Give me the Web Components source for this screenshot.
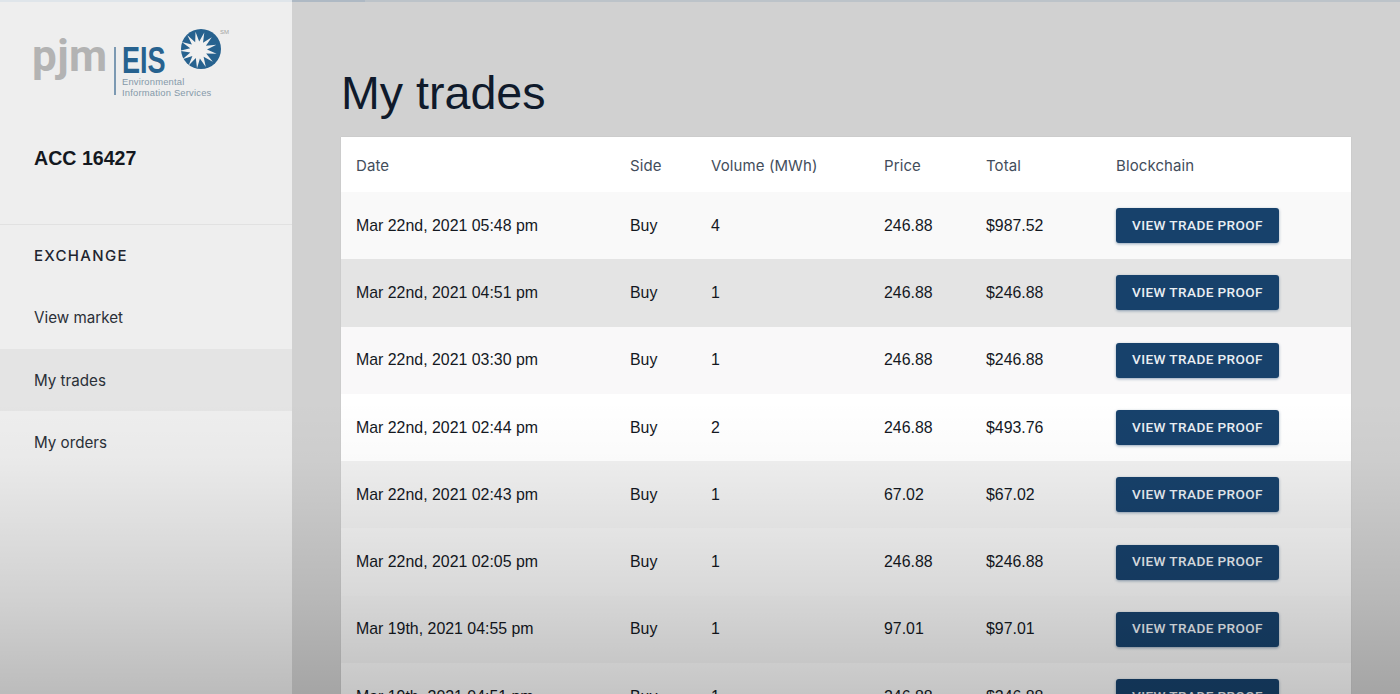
<!DOCTYPE html>
<html>
<head>
<meta charset="utf-8">
<title>My trades</title>
<style>
  html, body { margin: 0; height: 694px; overflow: hidden; }
  body { font-family: "Liberation Sans", Arial, sans-serif; background: #d1d1d1; }
</style>
</head>
<body>
<trades-app>
  <pjm-sidebar slot="side" account="ACC 16427"></pjm-sidebar>
  <trades-table></trades-table>
</trades-app>

<script>
'use strict';

const trades = [
  ["Mar 22nd, 2021 05:48 pm", "Buy", "4", "246.88", "$987.52"],
  ["Mar 22nd, 2021 04:51 pm", "Buy", "1", "246.88", "$246.88"],
  ["Mar 22nd, 2021 03:30 pm", "Buy", "1", "246.88", "$246.88"],
  ["Mar 22nd, 2021 02:44 pm", "Buy", "2", "246.88", "$493.76"],
  ["Mar 22nd, 2021 02:43 pm", "Buy", "1", "67.02", "$67.02"],
  ["Mar 22nd, 2021 02:05 pm", "Buy", "1", "246.88", "$246.88"],
  ["Mar 19th, 2021 04:55 pm", "Buy", "1", "97.01", "$97.01"],
  ["Mar 19th, 2021 04:51 pm", "Buy", "1", "246.88", "$246.88"]
];
// row tints as they come out of the video still
const rowColors = ["#f9f9f9", "#e4e4e4", "#f9f8f9", "#ffffff", "#f1f1f1", "#f5f5f5", "#f3f3f3", "#fafafa"];

// white spikes of the sun mark
function sunPoints(cx, cy, spikes, inner, outer) {
  let pts = [];
  for (let i = 0; i < spikes * 2; i++) {
    let r = i % 2 ? inner : outer;
    let a = (Math.PI * i) / spikes + 0.2;
    pts.push((cx + r * Math.cos(a)).toFixed(1) + "," + (cy + r * Math.sin(a)).toFixed(1));
  }
  return pts.join(" ");
}

class PjmLogo extends HTMLElement {
  constructor() {
    super();
    this.attachShadow({ mode: "open" });
    this.shadowRoot.innerHTML = `
      <style>
        :host { display: flex; align-items: flex-start; height: 70px; font-family: "Liberation Sans", Arial, sans-serif; }
        .pjm { font: 700 44px/48px Roboto, sans-serif; color: #b3b3b3; letter-spacing: .4px; margin: 4px 0 0 -1px; width: 82px; flex: none; }
        .rule { width: 2px; height: 48px; background: #7c99b2; margin-top: 19px; flex: none; }
        .text { margin: 17px 0 0 6px; width: 59px; flex: none; }
        .eis { font-size: 37px; font-weight: 700; color: #27628f; line-height: 32px; transform: scaleX(.73); transform-origin: left; white-space: nowrap; }
        .sub { font-size: 9.4px; line-height: 10.5px; color: #8599a9; white-space: nowrap; letter-spacing: .2px; }
        svg { flex: none; margin-top: 1px; }
        .sm { font-size: 6px; color: #a3a3a3; margin: 1px 0 0 -1px; }
      </style>
      <span class="pjm">pjm</span>
      <span class="rule"></span>
      <div class="text">
        <div class="eis">EIS</div>
        <div class="sub">Environmental<br>Information Services</div>
      </div>
      <svg width="40" height="40" viewBox="0 0 40 40">
        <circle cx="20" cy="20" r="20" fill="#27628f"/>
        <polygon points="${sunPoints(17.5, 21, 13, 8.5, 18.5)}" fill="#f0f0f0"/>
      </svg>
      <span class="sm">SM</span>`;
  }
}
customElements.define("pjm-logo", PjmLogo);

class NavItem extends HTMLElement {
  constructor() {
    super();
    this.attachShadow({ mode: "open" });
    this.shadowRoot.innerHTML = `
      <style>
        :host { display: flex; align-items: center; height: 62.4px; padding-left: 34px; font: 400 15.2px Inter, Roboto, sans-serif; color: #2b3038; }
        :host([active]) { background: #e4e4e4; }
      </style>
      <slot></slot>`;
  }
}
customElements.define("nav-item", NavItem);

class PjmSidebar extends HTMLElement {
  constructor() {
    super();
    this.attachShadow({ mode: "open" });
    this.shadowRoot.innerHTML = `
      <style>
        :host { display: block; width: 292px; flex: none; height: 694px; background: #eeeeee; box-sizing: border-box; }
        .top { height: 225px; box-sizing: border-box; padding: 28px 0 0 33px; border-bottom: 1px solid #e1e1e1; }
        .acc { font-size: 19.6px; font-weight: 700; color: #14181f; margin: 48px 0 0 1px; line-height: 24px; }
        h2 { margin: 0; padding: 0 0 0 34px; font: 500 15px Inter, Roboto, sans-serif; letter-spacing: 1.3px; color: #1e2530; line-height: 20px; }
        nav { display: block; padding-top: 21px; }
        .list { margin-top: 20.6px; }
      </style>
      <div class="top">
        <pjm-logo></pjm-logo>
        <div class="acc">${this.getAttribute("account")}</div>
      </div>
      <nav>
        <h2>EXCHANGE</h2>
        <div class="list">
          <nav-item>View market</nav-item>
          <nav-item active>My trades</nav-item>
          <nav-item>My orders</nav-item>
        </div>
      </nav>`;
  }
}
customElements.define("pjm-sidebar", PjmSidebar);

class ProofButton extends HTMLElement {
  constructor() {
    super();
    this.attachShadow({ mode: "open" });
    this.shadowRoot.innerHTML = `
      <style>
        :host { display: inline-flex; align-items: center; justify-content: center; width: 163px; height: 35px; padding-bottom: 2px; box-sizing: border-box; background: #17416b; color: #e9eef3; border-radius: 3px; box-shadow: 0 1px 3px rgba(23,65,107,.45); font: 500 13.6px Roboto, sans-serif; letter-spacing: .4px; }
      </style>
      <slot></slot>`;
  }
}
customElements.define("proof-button", ProofButton);

class TradeRow extends HTMLElement {
  set trade(t) {
    this.attachShadow({ mode: "open" });
    this.shadowRoot.innerHTML = `
      <style>
        :host { display: grid; grid-template-columns: 274px 81px 173px 102px 130px 1fr; align-items: center; height: 67.3px; padding-left: 15px; font-size: 15.9px; color: #14181f; }
      </style>
      ${t.map((v) => `<span>${v}</span>`).join("")}
      <div><proof-button>VIEW TRADE PROOF</proof-button></div>`;
  }
}
customElements.define("trade-row", TradeRow);

class TradesTable extends HTMLElement {
  constructor() {
    super();
    this.attachShadow({ mode: "open" });
    this.shadowRoot.innerHTML = `
      <style>
        :host { display: block; background: #fff; box-shadow: 0 0 1px rgba(0,0,0,.12); }
        .head { display: grid; grid-template-columns: 274px 81px 173px 102px 130px 1fr; align-items: center; height: 54px; padding: 1px 0 0 15px; font: 400 15px Inter, Roboto, sans-serif; letter-spacing: .1px; color: #434d5b; }
      </style>
      <div class="head">
        <span>Date</span><span>Side</span><span>Volume (MWh)</span><span>Price</span><span>Total</span><span>Blockchain</span>
      </div>
      <div id="rows"></div>`;
    let rows = this.shadowRoot.querySelector("#rows");
    trades.forEach((t, i) => {
      let row = document.createElement("trade-row");
      row.trade = t;
      row.style.background = rowColors[i];
      rows.appendChild(row);
    });
  }
}
customElements.define("trades-table", TradesTable);

class TradesApp extends HTMLElement {
  constructor() {
    super();
    this.attachShadow({ mode: "open" });
    this.shadowRoot.innerHTML = `
      <style>
        :host { display: flex; position: relative; height: 694px; overflow: hidden; }
        main { flex: 1; padding: 0 49px; min-width: 0; }
        h1 { margin: 0; padding-top: 65px; height: 72px; font: 400 46.6px/56px "Liberation Sans", Arial, sans-serif; color: #0f1a2b; }
        /* darkening over the whole frame, comes from the video still */
        .shade { position: absolute; inset: 0; pointer-events: none;
          background: linear-gradient(to bottom, rgba(0,0,0,0) 400px, rgba(0,0,0,.02) 460px, rgba(0,0,0,.07) 530px, rgba(0,0,0,.12) 600px, rgba(0,0,0,.21) 694px); }
        .edge { position: absolute; left: 0; right: 0; top: 0; height: 2px; pointer-events: none;
          background: linear-gradient(to right, #dfe5ea 292px, #aeb9c4 292px, #aeb9c4 365px, #bcc3c9 365px); }
      </style>
      <slot name="side"></slot>
      <main>
        <h1>My trades</h1>
        <slot></slot>
      </main>
      <div class="shade"></div>
      <div class="edge"></div>`;
  }
}
customElements.define("trades-app", TradesApp);
</script>
</body>
</html>
